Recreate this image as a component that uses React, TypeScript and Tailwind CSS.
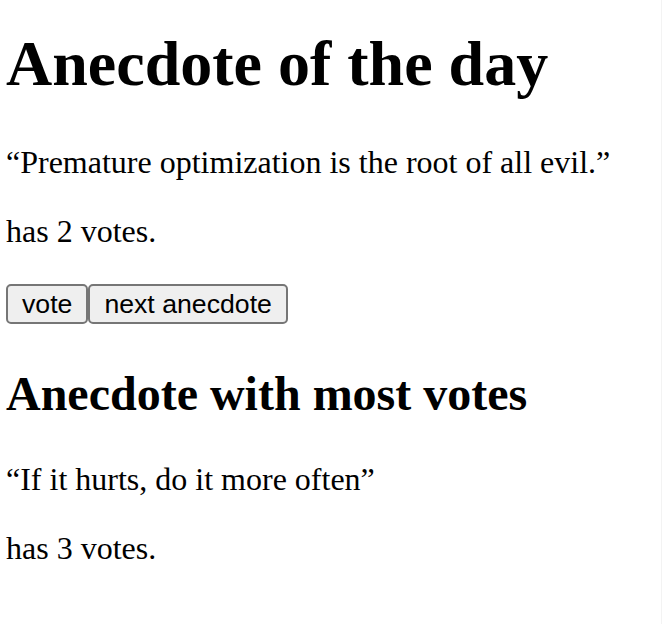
import React from "react";

const Button: React.FC<{ label: string }> = ({ label }) => (
  <button className="h-[40px] px-[14px] bg-[#efefef] border-2 border-[#767676] rounded-[5px] text-[26.67px] leading-[30px] text-black font-['Liberation_Sans',Arial,sans-serif]">
    {label}
  </button>
);

export default function App() {
  return (
    <div className="min-h-screen bg-white text-black pt-[27px] pl-[6px] border-r border-[#f3f3f3] font-['Liberation_Serif','Times_New_Roman',serif]">
      <h1 className="text-[64px] leading-[74px] font-bold mt-0 mb-[43px]">
        Anecdote of the day
      </h1>
      <p className="text-[32px] leading-[37px] my-[32px]">
        “Premature optimization is the root of all evil.”
      </p>
      <p className="text-[32px] leading-[37px] my-[32px]">has 2 votes.</p>

      <div className="flex items-start py-[2px]">
        <Button label="vote" />
        <Button label="next anecdote" />
      </div>

      <h2 className="text-[48px] leading-[55px] font-bold my-[40px]">
        Anecdote with most votes
      </h2>
      <p className="text-[32px] leading-[37px] my-[32px]">
        “If it hurts, do it more often”
      </p>
      <p className="text-[32px] leading-[37px] my-[32px]">has 3 votes.</p>
    </div>
  );
}
